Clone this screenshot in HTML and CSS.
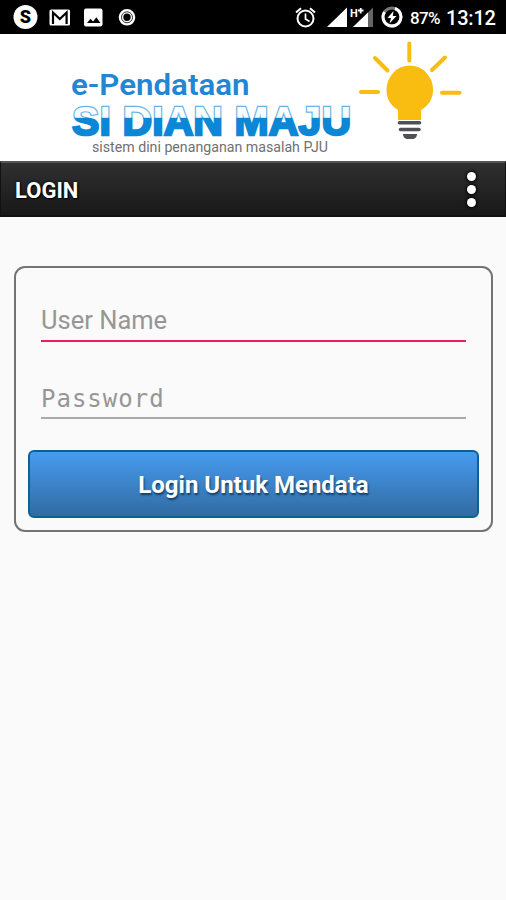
FILE: index.html
```html
<!DOCTYPE html>
<html lang="id">
<head>
<meta charset="utf-8">
<title>e-Pendataan</title>
<link rel="stylesheet" href="styles.css">
</head>
<body>
<div class="status">
  <svg class="icons-left" width="126" height="34" viewBox="0 0 126 34">
    <circle cx="12.5" cy="17" r="12" fill="#fff"/>
    <text x="12.5" y="23" class="coin" text-anchor="middle">S</text>
    <rect x="36.500" y="9.500" width="20.500" height="16" rx="1.500" fill="#fff"/>
    <path d="M40 24V12.500l6.800 6.500 6.800-6.500V24" fill="none" stroke="#000" stroke-width="2.200"/>
    <rect x="71" y="8.500" width="18.500" height="18" rx="2" fill="#fff"/>
    <path d="M74 23l3.500-4.200 2.600 2.800 3.300-4.400 4 5.800z" fill="#000"/>
    <circle cx="114" cy="17.300" r="6" fill="none" stroke="#fff" stroke-width="4.600"/>
    <circle cx="114" cy="17.300" r="5.500" fill="none" stroke="#333" stroke-width="1"/>
  </svg>
  <div class="status-right">
    <svg width="110" height="34" viewBox="295 0 110 34">
      <circle cx="305.500" cy="18.500" r="8" fill="none" stroke="#fff" stroke-width="2"/>
      <path d="M305.500 13.500v5.500l4 2.500" fill="none" stroke="#fff" stroke-width="1.700"/>
      <path d="M296 12.500l5-4.300M315 12.500l-5-4.300" stroke="#fff" stroke-width="2"/>
      <path d="M327 27L347 7.500V27z" fill="#fff"/>
      <path d="M353 27L373 7.500V27z" fill="#666"/>
      <path d="M353 27L368 12.500V27z" fill="#fff"/>
      <path d="M349 6h16v9h-6l-4 3h-6z" fill="#000"/>
      <text x="350" y="16.500" class="net">H</text>
      <path d="M358 10.500h5.500M360.700 8v5.500" stroke="#fff" stroke-width="1.800"/>
      <circle cx="392" cy="17" r="9" fill="none" stroke="#777" stroke-width="3"/>
      <path d="M395 8.500A9 9 0 1 1 384.500 12" fill="none" stroke="#fff" stroke-width="3"/>
      <path d="M393.500 11l-6 7h3.500l-1.500 5.500 7-7.500h-3.700z" fill="#fff"/>
    </svg>
    <span class="battery">87%</span>
    <span class="clock">13:12</span>
  </div>
</div>
<header class="banner">
  <svg width="506" height="127" viewBox="0 34 506 127">
    <defs>
      <linearGradient id="split" gradientUnits="userSpaceOnUse" x1="0" y1="106" x2="0" y2="136">
        <stop offset="0" stop-color="#fff"/><stop offset=".38" stop-color="#f4faff"/>
        <stop offset=".4" stop-color="#0b87d5"/><stop offset="1" stop-color="#0b87d5"/>
      </linearGradient>
      <linearGradient id="edge" gradientUnits="userSpaceOnUse" x1="0" y1="106" x2="0" y2="136">
        <stop offset=".36" stop-color="#68b3e5"/><stop offset=".42" stop-color="#0b87d5"/>
      </linearGradient>
    </defs>
    <text x="71" y="95" class="product" textLength="178.500" lengthAdjust="spacingAndGlyphs">e-Pendataan</text>
    <text x="72" y="134.800" class="wordmark" fill="url(#split)" stroke="url(#edge)" textLength="279">SI DIAN MAJU</text>
    <text x="92" y="152.300" class="tagline" textLength="236" lengthAdjust="spacingAndGlyphs">sistem dini penanganan masalah PJU</text>
    <g stroke="#f8bd10" stroke-width="4" stroke-linecap="round">
      <path d="M409.300 43.500v17M375 58l12.500 12.500M445 57.500L432 70M361 92h17M442 92.700h17.500"/>
    </g>
    <path d="M398 120v-10c-7-4-11.500-11-11.500-20a23.300 24.500 0 0 1 46.600 0c0 9-5 16-12 20v10z" fill="#f8bd10"/>
    <path d="M399.500 122.700h20M400.500 129.500h18.500" stroke="#505054" stroke-width="3.600" stroke-linecap="round"/>
    <path d="M403 134h14c0 3-2 5-5 5h-4c-3 0-5-2-5-5z" fill="#505054"/>
  </svg>
</header>
<div class="toolbar">
  <span>LOGIN</span>
  <div class="menu"><i></i><i></i><i></i></div>
</div>
<main class="panel">
  <div class="field focused">User Name</div>
  <div class="field password">Password</div>
  <div class="button">Login Untuk Mendata</div>
</main>
</body>
</html>
```
FILE: styles.css
```css
* { box-sizing: border-box; }
body { margin: 0; min-height: 900px; background: #fafafa; font-family: Roboto, sans-serif; }
svg { display: block; }
.status { height: 34px; background: #000; color: #fff; display: flex; justify-content: space-between; padding: 0 10px 0 13px; }
.status-right { display: flex; align-items: center; }
.coin { font: 900 18px Roboto, sans-serif; fill: #000; }
.net { font: 700 11px Roboto, sans-serif; fill: #fff; }
.battery { width: 36px; margin-left: 5px; font-size: 17px; letter-spacing: -.6px; font-weight: 500; padding-top: 1px; }
.clock { width: 50px; font-size: 20px; font-weight: 500; letter-spacing: -.2px; white-space: nowrap; padding-top: 1px; }
.banner { height: 127px; background: #fff; }
.product { font: 600 29.5px Roboto, sans-serif; fill: #2386d3; }
.wordmark { font: 700 41px "Liberation Sans", sans-serif; stroke-width: 2.4; paint-order: stroke; }
.tagline { font: 400 14px Roboto, sans-serif; fill: #707070; }
.toolbar { height: 56px; display: flex; align-items: center; justify-content: space-between; padding: 3px 29px 0 15px; border: 1px solid #111; border-top: 2px solid #555; border-bottom-width: 2px; background: linear-gradient(#303030, #181818); color: #fff; font-size: 22px; font-weight: 700; text-shadow: 0 0 3px #000, 1px 1px 1px #000; }
.toolbar span { margin-left: -1px; }
.menu { display: flex; flex-direction: column; gap: 4px; margin-top: -3px; }
.menu i { width: 9px; height: 9px; border-radius: 50%; background: #fff; box-shadow: 0 0 3px 1px #000; }
.panel { width: 479px; height: 266px; margin: 49px 0 0 14px; padding: 28px 12px 12px; border: 2px solid #747474; border-radius: 11px; }
.field { height: 46px; margin: 0 13px; border-bottom: 2px solid #aaa; color: #969696; font-size: 25.5px; line-height: 49px; }
.focused { border-color: #e91e63; }
.password { margin-top: 31px; font-family: "DejaVu Sans Mono", monospace; font-size: 24px; letter-spacing: 1px; line-height: 52px; }
.button { height: 68px; margin-top: 31px; border: 2px solid #0c6093; border-radius: 6px; background: linear-gradient(#479bf0, #316ba2); color: #fff; text-align: center; line-height: 66px; font-size: 24px; font-weight: 700; text-shadow: 1px 2px 2px #123d65; }
```
